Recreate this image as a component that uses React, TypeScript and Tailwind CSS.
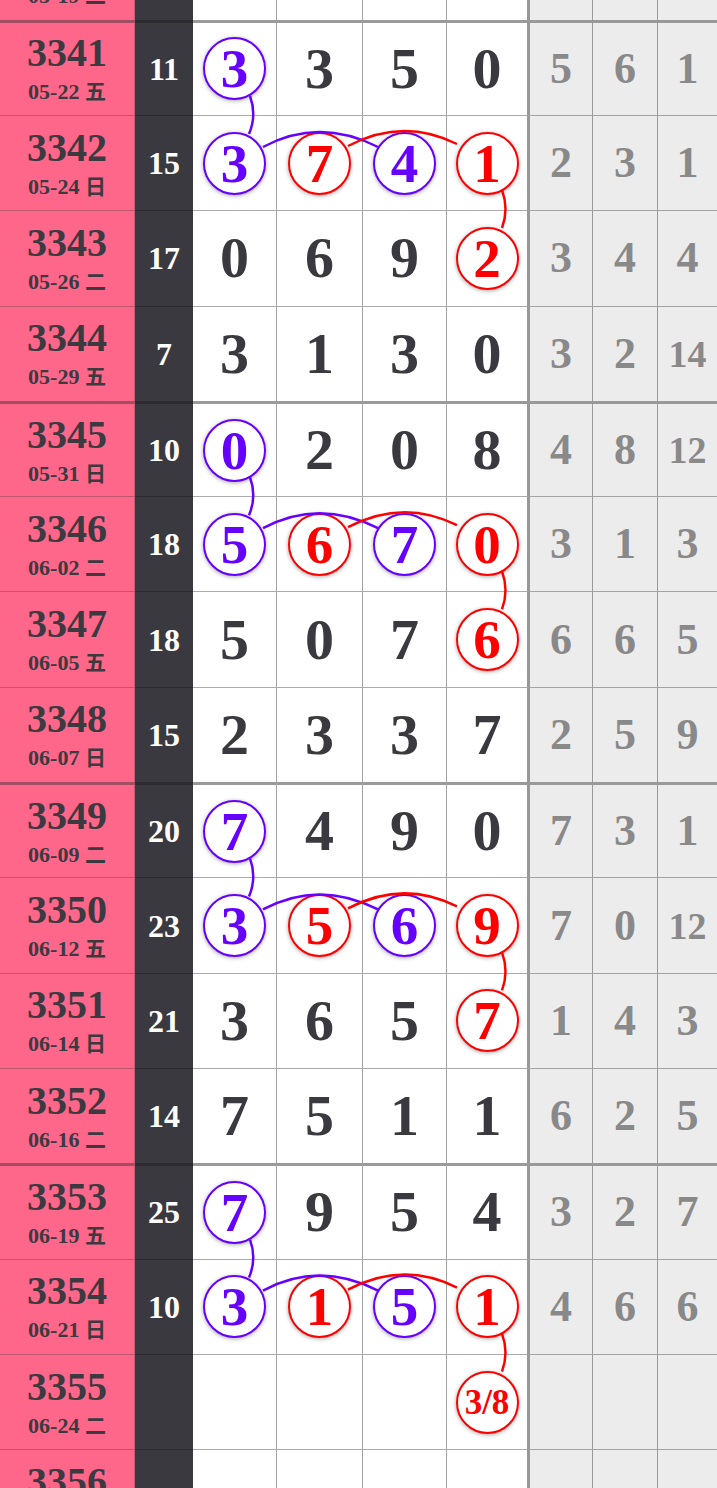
import React from 'react'

type Mark = 'b' | 'r' | null
type Cell = [string, Mark]

interface Row {
  no: string
  date: string
  week: string
  sum: string
  nums: Cell[]
  tail: string[]
}

const n = (v: string, m: Mark = null): Cell => [v, m]

const rows: Row[] = [
  { no: '3340', date: '05-19', week: '二', sum: '', nums: [n(''), n(''), n(''), n('')], tail: ['', '', ''] },
  { no: '3341', date: '05-22', week: '五', sum: '11', nums: [n('3', 'b'), n('3'), n('5'), n('0')], tail: ['5', '6', '1'] },
  { no: '3342', date: '05-24', week: '日', sum: '15', nums: [n('3', 'b'), n('7', 'r'), n('4', 'b'), n('1', 'r')], tail: ['2', '3', '1'] },
  { no: '3343', date: '05-26', week: '二', sum: '17', nums: [n('0'), n('6'), n('9'), n('2', 'r')], tail: ['3', '4', '4'] },
  { no: '3344', date: '05-29', week: '五', sum: '7', nums: [n('3'), n('1'), n('3'), n('0')], tail: ['3', '2', '14'] },
  { no: '3345', date: '05-31', week: '日', sum: '10', nums: [n('0', 'b'), n('2'), n('0'), n('8')], tail: ['4', '8', '12'] },
  { no: '3346', date: '06-02', week: '二', sum: '18', nums: [n('5', 'b'), n('6', 'r'), n('7', 'b'), n('0', 'r')], tail: ['3', '1', '3'] },
  { no: '3347', date: '06-05', week: '五', sum: '18', nums: [n('5'), n('0'), n('7'), n('6', 'r')], tail: ['6', '6', '5'] },
  { no: '3348', date: '06-07', week: '日', sum: '15', nums: [n('2'), n('3'), n('3'), n('7')], tail: ['2', '5', '9'] },
  { no: '3349', date: '06-09', week: '二', sum: '20', nums: [n('7', 'b'), n('4'), n('9'), n('0')], tail: ['7', '3', '1'] },
  { no: '3350', date: '06-12', week: '五', sum: '23', nums: [n('3', 'b'), n('5', 'r'), n('6', 'b'), n('9', 'r')], tail: ['7', '0', '12'] },
  { no: '3351', date: '06-14', week: '日', sum: '21', nums: [n('3'), n('6'), n('5'), n('7', 'r')], tail: ['1', '4', '3'] },
  { no: '3352', date: '06-16', week: '二', sum: '14', nums: [n('7'), n('5'), n('1'), n('1')], tail: ['6', '2', '5'] },
  { no: '3353', date: '06-19', week: '五', sum: '25', nums: [n('7', 'b'), n('9'), n('5'), n('4')], tail: ['3', '2', '7'] },
  { no: '3354', date: '06-21', week: '日', sum: '10', nums: [n('3', 'b'), n('1', 'r'), n('5', 'b'), n('1', 'r')], tail: ['4', '6', '6'] },
  { no: '3355', date: '06-24', week: '二', sum: '', nums: [n(''), n(''), n(''), n('3/8', 'r')], tail: ['', '', ''] },
  { no: '3356', date: '06-26', week: '日', sum: '', nums: [n(''), n(''), n(''), n('')], tail: ['', '', ''] },
]

const numWidths = ['w-[83px]', 'w-[86px] border-l', 'w-[84px] border-l', 'w-[81px] border-l']
const tailWidths = ['w-[65px] border-l-[3px] border-l-[#979797]', 'w-[65px] border-l border-l-[#999]', 'w-[60px] border-l border-l-[#999]']

function Ball({ value, mark }: { value: string; mark: 'b' | 'r' }) {
  const small = value.length > 1
  return (
    <div
      className={`w-[63px] h-[63px] rounded-full bg-white border-[2.5px] flex items-center justify-center shadow-[0_1px_4px_rgba(0,0,0,0.35)] ${
        mark === 'b' ? 'border-[#6600ff] text-[#6600ff]' : 'border-[#ff0000] text-[#ff0000]'
      } ${small ? 'text-[35px] leading-[35px]' : 'text-[55px] leading-[55px]'}`}
    >
      {value}
    </div>
  )
}

// connector curves for one group, page coords of the first group
const blue = ['M250 96 Q257 115 249 134', 'M263 147 Q319 117 378 147']
const red = ['M348 146 Q403 117 457 144', 'M502 190 Q509 209 502 228']

export default function App() {
  return (
    <div
      className="relative h-[1488px] w-[717px] overflow-hidden bg-white font-bold"
      style={{ fontFamily: '"Liberation Serif", "Noto Sans CJK SC", serif' }}
    >
      <div className="mt-[-75.6px]">
        {rows.map((row, i) => {
          const thick = i % 4 === 1
          const bt = thick ? 'border-t-[3px]' : 'border-t'
          return (
            <div key={row.no} className="flex h-[95.3px]">
              {/* issue + date */}
              <div className={`w-[135px] ${bt} ${thick ? 'border-t-[#a14d62]' : 'border-t-[#c0566f]'} border-r border-r-[#c25a74] bg-[#fe668a] text-[#3b3a40] flex flex-col items-center justify-center`}>
                <div className="text-[40px] leading-[40px]">{row.no}</div>
                <div className="mt-[5px] text-[22px] leading-[24px] whitespace-nowrap">
                  {row.date}{' '}
                  <span style={{ fontFamily: '"Noto Sans CJK SC", sans-serif' }} className="text-[21px]">
                    {row.week}
                  </span>
                </div>
              </div>

              {/* sum */}
              <div className={`w-[58px] ${bt} border-t-[#2c2b30] bg-[#3a393f] text-white text-[32px] leading-[32px] flex items-center justify-center`}>
                {row.sum}
              </div>

              {/* numbers */}
              {row.nums.map(([v, m], j) => (
                <div
                  key={j}
                  className={`${numWidths[j]} ${bt} ${thick ? 'border-t-[#9a9a9a]' : 'border-t-[#ababab]'} border-l-[#a3a3a3] bg-white text-[#3a393f] text-[58px] leading-[58px] flex items-center justify-center`}
                >
                  {m ? <Ball value={v} mark={m} /> : v}
                </div>
              ))}

              {/* tail */}
              {row.tail.map((t, j) => (
                <div
                  key={j}
                  className={`${tailWidths[j]} ${bt} ${thick ? 'border-t-[#999]' : 'border-t-[#a3a3a3]'} bg-[#ececec] text-[#898989] flex items-center justify-center ${
                    t.length > 1 ? 'text-[38px] leading-[38px]' : 'text-[44px] leading-[44px]'
                  }`}
                >
                  {t}
                </div>
              ))}
            </div>
          )
        })}
      </div>

      <svg className="absolute left-0 top-0 pointer-events-none" width="717" height="1488" fill="none" strokeWidth="2.5">
        {[0, 1, 2, 3].map(g => (
          <g key={g} transform={`translate(0 ${g * 381.2})`}>
            {blue.map(d => (
              <path key={d} d={d} stroke="#6600ff" />
            ))}
            {red.map(d => (
              <path key={d} d={d} stroke="#ff0000" />
            ))}
          </g>
        ))}
      </svg>
    </div>
  )
}
